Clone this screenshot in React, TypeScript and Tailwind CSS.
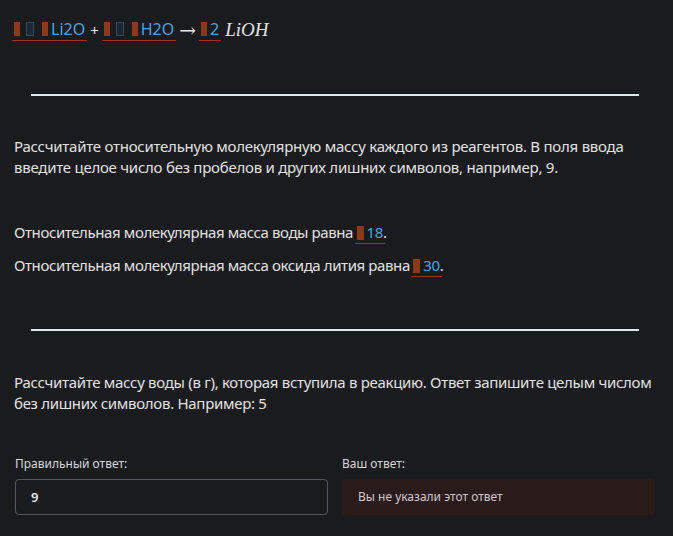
// Результат проверки задания: уравнение реакции, ответы в полях, итоговый ответ.
const font = { fontFamily: '"Noto Sans", "Open Sans", sans-serif' };

function Brick() {
  return <span className="inline-block h-[14px] w-[6px] bg-[#8a3a1a]" />;
}

function Ghost() {
  return <span className="inline-block h-[14px] w-[8px] border border-[#2f4a66] bg-[#1d2733]" />;
}

function Slot({ children, ghost }: { children: React.ReactNode; ghost?: boolean }) {
  return (
    <span className="inline-flex items-center border-b border-[#9a2f28] px-[2px] pb-[2px] leading-[18px]">
      <Brick />
      {ghost && (
        <>
          <span className="w-[6px]" />
          <Ghost />
          <span className="w-[8px]" />
          <Brick />
        </>
      )}
      <span className="ml-[3px] text-[16px] text-[#4aa3e6]">{children}</span>
    </span>
  );
}

function Field({ children }: { children: React.ReactNode }) {
  return (
    <span className="relative inline-block leading-[18px]">
      <span className="mr-[3px] inline-block h-[14px] w-[7px] translate-y-[2px] bg-[#8a3a1a]" />
      <span className="text-[#4aa3e6]">{children}</span>
      <span className="absolute -bottom-[3px] left-[-2px] right-[-2px] h-px bg-[#9a2f28]" />
    </span>
  );
}

function Rule() {
  return <div className="ml-[19px] h-[3px] w-[608px] border-t border-[#11161c] bg-[#e3e8ee]" />;
}

export default function App() {
  return (
    <div className="min-h-[536px] w-[673px] bg-[#1a1b1d] px-[12px] pt-[18px] text-[15px] text-[#e2e2e2]" style={font}>
      <div className="flex h-[24px] items-center gap-[3px] text-[15px]">
        <Slot ghost>Li2O</Slot>
        <span className="text-[#e8e8e8]">+</span>
        <Slot ghost>H2O</Slot>
        <span
          className="text-[20px] leading-[18px] text-[#e8e8e8]"
          style={{ fontFamily: '"DejaVu Serif", serif' }}
        >
          →
        </span>
        <Slot>2</Slot>
        <span
          className="ml-[1px] text-[19px] italic text-[#e4e4e4]"
          style={{ fontFamily: '"Liberation Serif", serif' }}
        >
          LiOH
        </span>
      </div>

      <div className="mt-[51px]">
        <Rule />
      </div>

      <p className="ml-[2px] mt-[40px] w-[650px] leading-[21px] tracking-[-0.25px]">
        Рассчитайте относительную молекулярную массу каждого из реагентов. В поля ввода введите целое число без
        пробелов и других лишних символов, например, 9.
      </p>

      <div className="ml-[2px] mt-[44px] flex flex-col gap-[12px] leading-[21px] tracking-[-0.4px]">
        <p>
          Относительная молекулярная масса воды равна <Field>18</Field>.
        </p>
        <p>
          Относительная молекулярная масса оксида лития равна <Field>30</Field>.
        </p>
      </div>

      <div className="mt-[52px]">
        <Rule />
      </div>

      <p className="ml-[2px] mt-[41px] w-[652px] leading-[21px] tracking-[-0.3px]">
        Рассчитайте массу воды (в г), которая вступила в реакцию. Ответ запишите целым числом без лишних символов.
        Например: 5
      </p>

      <div className="ml-[3px] mt-[42px] grid w-[640px] grid-cols-2 gap-x-[14px] text-[12px] leading-[16px]">
        <div className="text-[#d6d6d6]">Правильный ответ:</div>
        <div className="text-[#d6d6d6]">Ваш ответ:</div>
        <div className="mt-[7px] flex h-[36px] items-center rounded-[4px] border border-[#55585c] px-[15px] text-[13px] font-semibold text-[#e6e6e6]">
          9
        </div>
        <div className="mt-[7px] flex h-[36px] items-center rounded-[3px] bg-[#2a1a1a] px-[16px] text-[12px] text-[#cfc8c8]">
          Вы не указали этот ответ
        </div>
      </div>
    </div>
  );
}
